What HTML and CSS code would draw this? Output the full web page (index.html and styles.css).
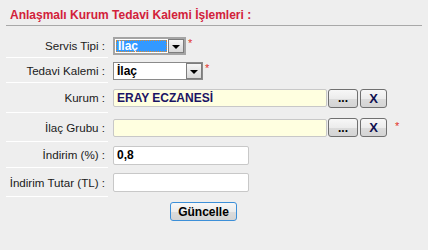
FILE: index.html
```html
<!DOCTYPE html>
<html>

<head>
    <meta charset="utf-8">
    <title>Anlaşmalı Kurum Tedavi Kalemi İşlemleri</title>
    <link rel="stylesheet" href="styles.css">
</head>

<body>
    <h1 class="title">Anlaşmalı Kurum Tedavi Kalemi İşlemleri :</h1>

    <div class="form">
        <div class="lbl">Servis Tipi :</div>
        <div class="fld">
            <span class="combo combo-focus combo-short">
                <span class="combo-text"><span class="combo-sel">İlaç</span></span>
                <span class="combo-btn"><span class="arrow"></span></span>
            </span>
            <span class="req">*</span>
        </div>

        <div class="lbl">Tedavi Kalemi :</div>
        <div class="fld">
            <span class="combo combo-long">
                <span class="combo-text">İlaç</span>
                <span class="combo-btn"><span class="arrow"></span></span>
            </span>
            <span class="req">*</span>
        </div>

        <div class="lbl">Kurum :</div>
        <div class="fld">
            <input class="txt txt-wide txt-yellow txt-blue" type="text" value="ERAY ECZANESİ">
            <button class="btn btn-dots">...</button>
            <button class="btn btn-x">X</button>
        </div>

        <div class="lbl">İlaç Grubu :</div>
        <div class="fld">
            <input class="txt txt-wide txt-yellow" type="text" value="">
            <button class="btn btn-dots">...</button>
            <button class="btn btn-x">X</button>
            <span class="req req-btn">*</span>
        </div>

        <div class="lbl">İndirim (%) :</div>
        <div class="fld">
            <input class="txt txt-mid" type="text" value="0,8">
        </div>

        <div class="lbl">İndirim Tutar (TL) :</div>
        <div class="fld">
            <input class="txt txt-mid" type="text" value="">
        </div>

        <div class="actions">
            <button class="btn btn-save">Güncelle</button>
        </div>
    </div>
</body>

</html>
```

FILE: styles.css
```css
body {
    margin: 0;
    background: #eeeeee;
    font-family: "Liberation Sans", Arial, sans-serif;
    font-size: 11px;
    color: #111;
}

.title {
    margin: 0 6px;
    padding: 8px 4px 3px;
    font-size: 12px;
    line-height: 14px;
    font-weight: bold;
    color: #d2213a;
    border-bottom: 1px solid #a8a8a8;
}

.form {
    display: grid;
    grid-template-columns: 102px 300px;
    grid-template-rows: 25px 25px 30px 29px 26px 29px auto;
    column-gap: 5px;
    margin: 7px 0 0 6px;
}

.lbl {
    display: flex;
    align-items: center;
    justify-content: flex-end;
    padding-right: 3px;
    border-bottom: 1px solid #fff;
    font-size: 11.6px;
    color: #1a1a1a;
}

.fld {
    display: flex;
    align-items: center;
}

.fld > * {
    flex-shrink: 0;
}

.combo {
    display: inline-flex;
    box-sizing: border-box;
    height: 18px;
    border: 1px solid #8a8a8a;
    background: #fff;
    font-size: 12px;
    font-weight: bold;
}

.combo-short {
    width: 73px;
}

.combo-long {
    width: 90px;
}

.combo-text {
    flex: 1;
    display: flex;
    align-items: center;
    padding-left: 3px;
    color: #000;
}

.combo-focus {
    border: 2px solid #a4a4a4;
}

.combo-focus .combo-text {
    padding: 1px;
}

.combo-sel {
    display: flex;
    align-items: center;
    width: 100%;
    height: 100%;
    box-sizing: border-box;
    padding-left: 2px;
    background: #3399ff;
    color: #fff;
    outline: 1px dotted #e08a2a;
    outline-offset: -1px;
}

.combo-btn {
    display: flex;
    align-items: center;
    justify-content: center;
    box-sizing: border-box;
    width: 16px;
    border: 1px solid #7d7d7d;
    background: linear-gradient(#f6f6f6, #d8d8d8);
}

.arrow {
    width: 0;
    height: 0;
    margin-top: 2px;
    border-left: 4px solid transparent;
    border-right: 4px solid transparent;
    border-top: 4px solid #000;
}

.req {
    align-self: flex-start;
    margin: 5px 0 0 2px;
    font-size: 11px;
    line-height: 10px;
    color: #e2322a;
}

.req-btn {
    margin: 8px 0 0 8px;
}

.txt {
    box-sizing: border-box;
    height: 18px;
    margin: 0;
    padding: 1px 3px;
    border: 1px solid #c8c8c8;
    border-radius: 2px;
    background: #fff;
    font-family: "Liberation Sans", Arial, sans-serif;
    font-size: 12px;
    font-weight: bold;
    color: #000;
}

.txt-wide {
    width: 214px;
}

.txt-mid {
    width: 136px;
    height: 19px;
}

.txt-yellow {
    background: #ffffe0;
}

.txt-blue {
    color: #1b1464;
}

.btn {
    box-sizing: border-box;
    height: 19px;
    margin: 0 0 0 1px;
    padding: 0;
    border: 1px solid #707070;
    border-radius: 3px;
    background: linear-gradient(#f7f7f7 0%, #ececec 50%, #dcdcdc 51%, #d4d4d4 100%);
    font-family: "Liberation Sans", Arial, sans-serif;
    font-size: 12px;
    font-weight: bold;
    color: #000;
}

.btn-dots {
    width: 30px;
    line-height: 12px;
}

.btn-x {
    width: 27px;
    margin-left: 2px;
    font-size: 13px;
    color: #101050;
}

.actions {
    grid-column: 1 / 3;
    padding: 5px 0 0 164px;
}

.btn-save {
    width: 67px;
    margin: 0;
    border: 1px solid #3c8fd8;
    border-radius: 3px;
}
```
